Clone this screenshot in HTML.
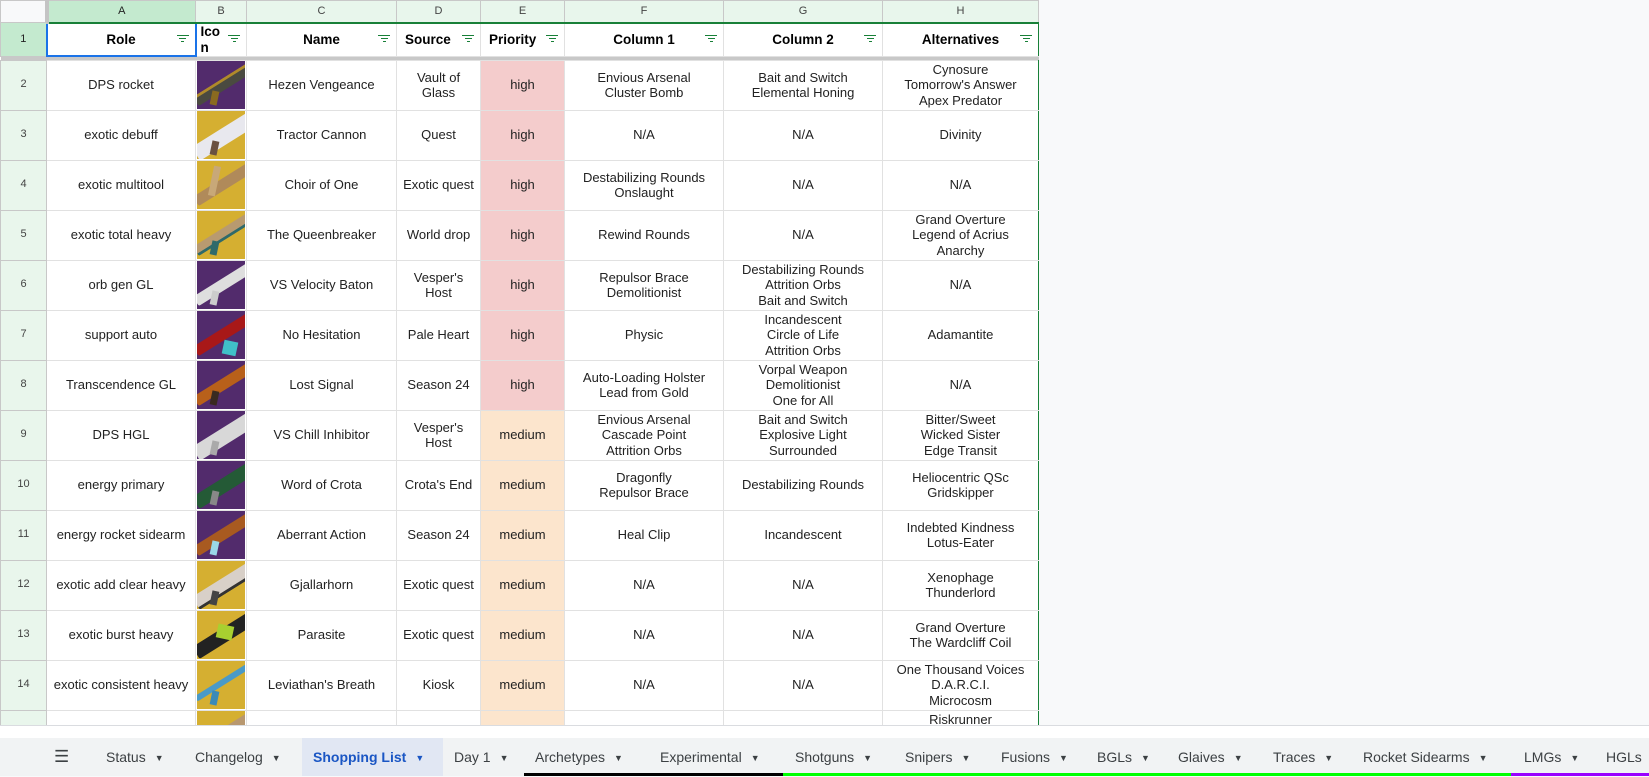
<!DOCTYPE html>
<html><head><meta charset="utf-8"><style>
*{margin:0;padding:0;box-sizing:border-box}
body{width:1649px;height:776px;overflow:hidden;background:#f8f9fa;font-family:"Liberation Sans",Arial,sans-serif;position:relative}
#grid{position:absolute;left:0;top:0;width:1039px;height:725px;overflow:hidden;background:#fff}
table{border-collapse:collapse;table-layout:fixed;font-size:13px;color:#222}
td{border:1px solid #e1e1e1;text-align:center;vertical-align:middle;line-height:15.5px;overflow:hidden;white-space:nowrap;position:relative;padding:0}
tr.r{height:50px}
td.rn{background:#e9f6ec;color:#444;font-size:11px;border-color:#c8c8c8}
tr.colh td{height:22px;background:#e8f6ec;color:#444;font-size:11px;border-color:#c8c8c8;border-bottom:2px solid #188038}
tr.colh td.corner{background:#f8f9fa;border-bottom:1px solid #c8c8c8;border-right:4px solid #c4c4c4}
tr.colh td.sel{background:#c4eacf;color:#222}
tr.h1 td{height:29px;font-weight:bold;font-size:13.5px;color:#000}
tr.h1 td.rn{background:#c4eacf;font-weight:normal;font-size:11px;color:#222}
tr.band td{height:4px;background:#c8c8c8;border:none}
td.f::after{content:"";position:absolute;right:6px;top:11px;width:12px;height:7px;
background:linear-gradient(#188038,#188038) 0 0/12px 1.4px no-repeat,linear-gradient(#188038,#188038) 2.5px 3px/7px 1.4px no-repeat,linear-gradient(#188038,#188038) 4.5px 6px/3px 1.4px no-repeat}
td.hi{background:#f4cccc}
td.me{background:#fce5cd}
td.ic{padding:0}
.icon{width:48px;height:48px;margin:0 auto;position:relative;overflow:hidden}
.icon .b{position:absolute;left:-6px;top:18px;width:64px;height:11px;transform:rotate(-32deg);border-radius:2px}
.icon .g{position:absolute;left:14px;top:30px;width:7px;height:14px;transform:rotate(12deg)}
.P{background:#522b6c}.Y{background:#d5af31}
td.lastc{border-right:1px solid #188038}
#hs{position:absolute;left:0;top:725px;width:1649px;height:13px;background:#fff;border-top:1px solid #dadce0}
#tabs{position:absolute;left:0;top:738px;width:1649px;height:38px;background:#f1f3f4;font-size:14px;color:#3c4043}
.t{position:absolute;top:0;height:38px;line-height:38px;white-space:nowrap}
.t i{font-style:normal;font-size:9px;margin-left:9px;vertical-align:1px}
.act{background:#e1e7f3;color:#1a56c4;font-weight:bold;padding-left:11px}
.ul{position:absolute;bottom:0;height:3px}
</style></head><body>
<div id="grid">
<table>
<colgroup><col style="width:46px"><col style="width:149px"><col style="width:51px"><col style="width:150px"><col style="width:84px"><col style="width:84px"><col style="width:159px"><col style="width:159px"><col style="width:156px"></colgroup>
<tr class="colh"><td class="corner"></td><td class="sel">A</td><td>B</td><td>C</td><td>D</td><td>E</td><td>F</td><td>G</td><td>H</td></tr>
<tr class="h1"><td class="rn">1</td><td class="f" style="border:2px solid #1a73e8">Role</td><td class="f" style="text-align:left;vertical-align:top;line-height:16px;padding-left:4px">Ico<br>n</td><td class="f">Name</td><td class="f" style="text-align:left;padding-left:8px">Source</td><td class="f" style="text-align:left;padding-left:8px">Priority</td><td class="f">Column 1</td><td class="f">Column 2</td><td class="f lastc">Alternatives</td></tr>
<tr class="band"><td colspan="9"></td></tr>
<tr class="r"><td class="rn">2</td><td>DPS rocket</td><td class="ic"><div class="icon P"><div class="b" style="background:#4a4a40;border-top:3px solid #b08a2a"></div><div class="g" style="background:#8a6a20"></div></div></td><td>Hezen Vengeance</td><td>Vault of<br>Glass</td><td class="hi">high</td><td>Envious Arsenal<br>Cluster Bomb</td><td>Bait and Switch<br>Elemental Honing</td><td class="lastc">Cynosure<br>Tomorrow's Answer<br>Apex Predator</td></tr>
<tr class="r"><td class="rn">3</td><td>exotic debuff</td><td class="ic"><div class="icon Y"><div class="b" style="background:#e8e8ee;height:16px"></div><div class="g" style="background:#6a5040"></div></div></td><td>Tractor Cannon</td><td>Quest</td><td class="hi">high</td><td>N/A</td><td>N/A</td><td class="lastc">Divinity</td></tr>
<tr class="r"><td class="rn">4</td><td>exotic multitool</td><td class="ic"><div class="icon Y"><div class="b" style="background:#b08a5a"></div><div class="g" style="background:#c8a878;height:30px;top:5px"></div></div></td><td>Choir of One</td><td>Exotic quest</td><td class="hi">high</td><td>Destabilizing Rounds<br>Onslaught</td><td>N/A</td><td class="lastc">N/A</td></tr>
<tr class="r"><td class="rn">5</td><td>exotic total heavy</td><td class="ic"><div class="icon Y"><div class="b" style="background:#b89a70;border-bottom:3px solid #2f6a6a"></div><div class="g" style="background:#2f6a6a"></div></div></td><td>The Queenbreaker</td><td>World drop</td><td class="hi">high</td><td>Rewind Rounds</td><td>N/A</td><td class="lastc">Grand Overture<br>Legend of Acrius<br>Anarchy</td></tr>
<tr class="r"><td class="rn">6</td><td>orb gen GL</td><td class="ic"><div class="icon P"><div class="b" style="background:#dedede"></div><div class="g" style="background:#ccc"></div></div></td><td>VS Velocity Baton</td><td>Vesper's<br>Host</td><td class="hi">high</td><td>Repulsor Brace<br>Demolitionist</td><td>Destabilizing Rounds<br>Attrition Orbs<br>Bait and Switch</td><td class="lastc">N/A</td></tr>
<tr class="r"><td class="rn">7</td><td>support auto</td><td class="ic"><div class="icon P"><div class="b" style="background:#a81818"></div><div class="g" style="background:#40c0c8;width:14px;left:26px"></div></div></td><td>No Hesitation</td><td>Pale Heart</td><td class="hi">high</td><td>Physic</td><td>Incandescent<br>Circle of Life<br>Attrition Orbs</td><td class="lastc">Adamantite</td></tr>
<tr class="r"><td class="rn">8</td><td>Transcendence GL</td><td class="ic"><div class="icon P"><div class="b" style="background:#b8601a"></div><div class="g" style="background:#3a2a20"></div></div></td><td>Lost Signal</td><td>Season 24</td><td class="hi">high</td><td>Auto-Loading Holster<br>Lead from Gold</td><td>Vorpal Weapon<br>Demolitionist<br>One for All</td><td class="lastc">N/A</td></tr>
<tr class="r"><td class="rn">9</td><td>DPS HGL</td><td class="ic"><div class="icon P"><div class="b" style="background:#d8d8d8;height:16px"></div><div class="g" style="background:#aaa"></div></div></td><td>VS Chill Inhibitor</td><td>Vesper's<br>Host</td><td class="me">medium</td><td>Envious Arsenal<br>Cascade Point<br>Attrition Orbs</td><td>Bait and Switch<br>Explosive Light<br>Surrounded</td><td class="lastc">Bitter/Sweet<br>Wicked Sister<br>Edge Transit</td></tr>
<tr class="r"><td class="rn">10</td><td>energy primary</td><td class="ic"><div class="icon P"><div class="b" style="background:#245a36;height:14px"></div><div class="g" style="background:#888"></div></div></td><td>Word of Crota</td><td>Crota's End</td><td class="me">medium</td><td>Dragonfly<br>Repulsor Brace</td><td>Destabilizing Rounds</td><td class="lastc">Heliocentric QSc<br>Gridskipper</td></tr>
<tr class="r"><td class="rn">11</td><td>energy rocket sidearm</td><td class="ic"><div class="icon P"><div class="b" style="background:#a85a20"></div><div class="g" style="background:#9ad8e8"></div></div></td><td>Aberrant Action</td><td>Season 24</td><td class="me">medium</td><td>Heal Clip</td><td>Incandescent</td><td class="lastc">Indebted Kindness<br>Lotus-Eater</td></tr>
<tr class="r"><td class="rn">12</td><td>exotic add clear heavy</td><td class="ic"><div class="icon Y"><div class="b" style="background:#d8d0c8;height:15px;border-bottom:3px solid #333"></div><div class="g" style="background:#444"></div></div></td><td>Gjallarhorn</td><td>Exotic quest</td><td class="me">medium</td><td>N/A</td><td>N/A</td><td class="lastc">Xenophage<br>Thunderlord</td></tr>
<tr class="r"><td class="rn">13</td><td>exotic burst heavy</td><td class="ic"><div class="icon Y"><div class="b" style="background:#222;height:14px"></div><div class="g" style="background:#a8d030;width:16px;left:20px;top:14px"></div></div></td><td>Parasite</td><td>Exotic quest</td><td class="me">medium</td><td>N/A</td><td>N/A</td><td class="lastc">Grand Overture<br>The Wardcliff Coil</td></tr>
<tr class="r"><td class="rn">14</td><td>exotic consistent heavy</td><td class="ic"><div class="icon Y"><div class="b" style="background:#4a9ac8;height:6px"></div><div class="g" style="background:#3a8ab8"></div></div></td><td>Leviathan's Breath</td><td>Kiosk</td><td class="me">medium</td><td>N/A</td><td>N/A</td><td class="lastc">One Thousand Voices<br>D.A.R.C.I.<br>Microcosm</td></tr>
<tr class="r"><td class="rn">15</td><td></td><td class="ic"><div class="icon Y"><div class="b" style="background:#b89870"></div></div></td><td></td><td></td><td class="me"></td><td></td><td></td><td class="lastc">Riskrunner<br>&nbsp;<br>&nbsp;</td></tr>
</table>
</div>
<div id="hs"></div>
<div id="tabs">
<div class="t" style="left:54px;font-size:17px">&#9776;</div>
<div class="t" style="left:106px">Status<i>&#9660;</i></div>
<div class="t" style="left:195px">Changelog<i>&#9660;</i></div>
<div class="t act" style="left:302px;width:141px">Shopping List<i>&#9660;</i></div>
<div class="t" style="left:454px">Day 1<i>&#9660;</i></div>
<div class="t" style="left:535px">Archetypes<i>&#9660;</i></div>
<div class="t" style="left:660px">Experimental<i>&#9660;</i></div>
<div class="t" style="left:795px">Shotguns<i>&#9660;</i></div>
<div class="t" style="left:905px">Snipers<i>&#9660;</i></div>
<div class="t" style="left:1001px">Fusions<i>&#9660;</i></div>
<div class="t" style="left:1097px">BGLs<i>&#9660;</i></div>
<div class="t" style="left:1178px">Glaives<i>&#9660;</i></div>
<div class="t" style="left:1273px">Traces<i>&#9660;</i></div>
<div class="t" style="left:1363px">Rocket Sidearms<i>&#9660;</i></div>
<div class="t" style="left:1524px">LMGs<i>&#9660;</i></div>
<div class="t" style="left:1606px">HGLs</div>
<div class="ul" style="left:524px;width:259px;background:#000"></div>
<div class="ul" style="left:783px;width:728px;background:#00ff00"></div>
<div class="ul" style="left:1511px;width:138px;background:#9900ff"></div>
</div>
</body></html>
